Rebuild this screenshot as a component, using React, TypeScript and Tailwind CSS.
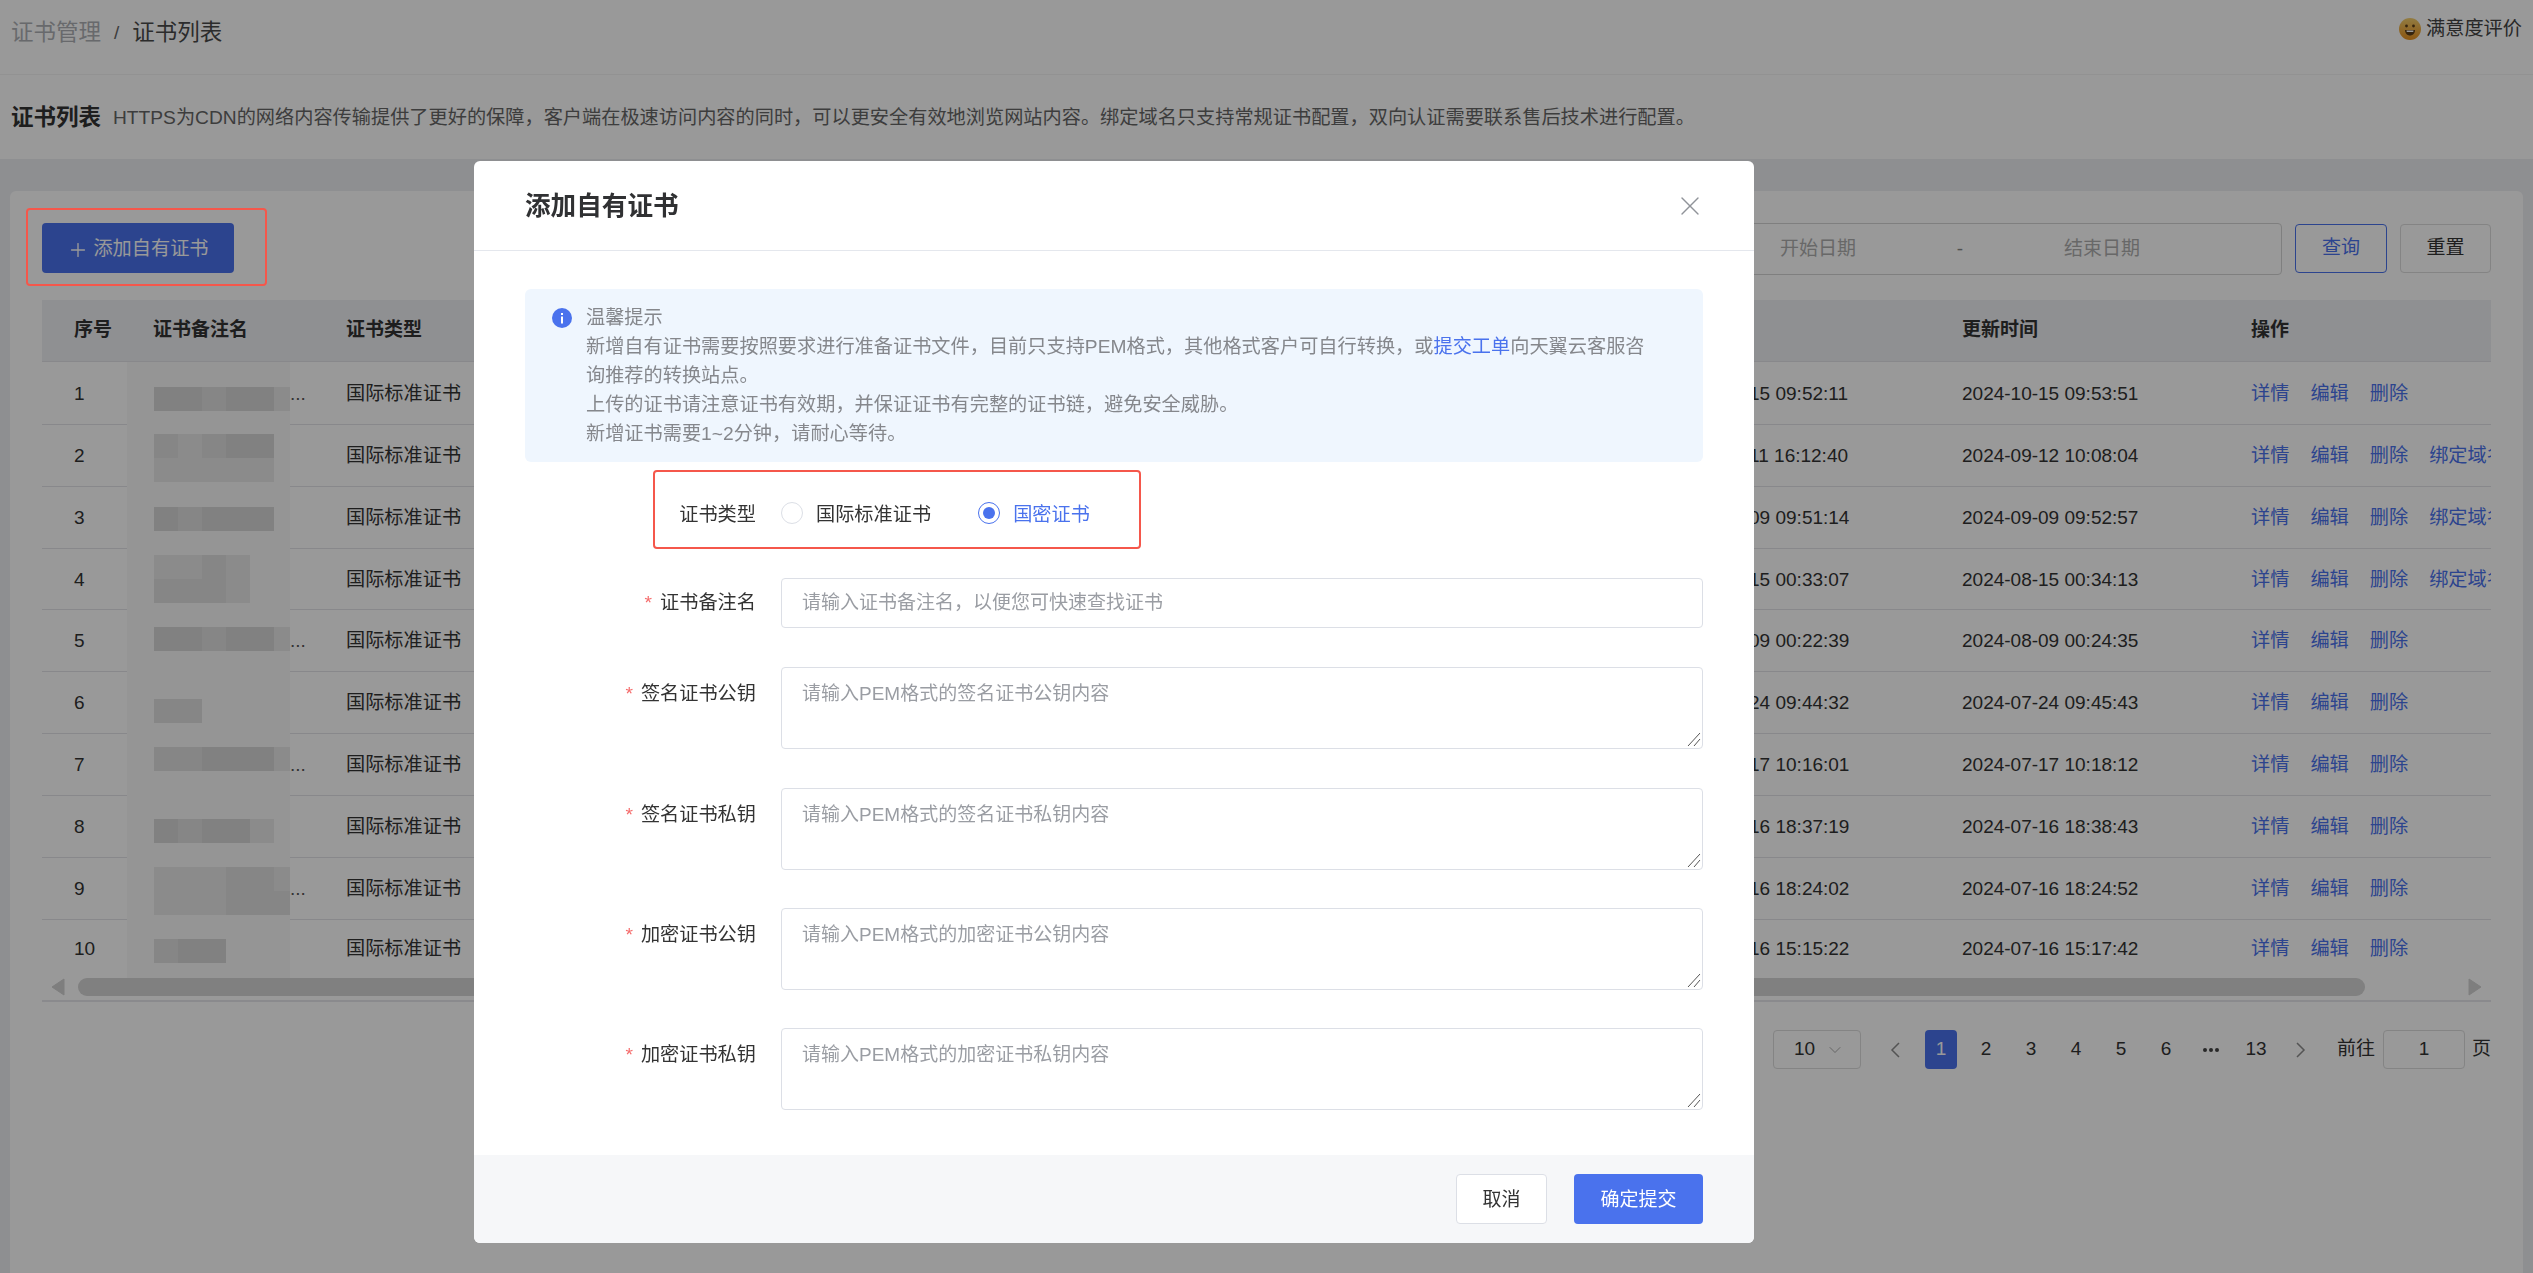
import { ChevronDown, Plus, X } from 'lucide-react';

const shade: Record<string, string> = {
  d: 'bg-[#d8d8d8]',
  m: 'bg-[#dfdfdf]',
  l: 'bg-[#e8e8e8]',
};

// name cell is a pixelated block in the picture: one string per line, one letter per cell
const rows = [
  { no: 1, h: 'h-[63px]', pt: 'pt-[25px]', cells: ['ddmddl'], more: true, created: '2024-10-15 09:52:11', updated: '2024-10-15 09:53:51', bind: false },
  { no: 2, h: 'h-[62px]', pt: 'pt-[9px]', cells: ['mlmdd', 'lllll'], more: false, created: '2024-09-11 16:12:40', updated: '2024-09-12 10:08:04', bind: true },
  { no: 3, h: 'h-[62px]', pt: 'pt-[20px]', cells: ['dmddd'], more: false, created: '2024-09-09 09:51:14', updated: '2024-09-09 09:52:57', bind: true },
  { no: 4, h: 'h-[61px]', pt: 'pt-[6px]', cells: ['llml', 'mmml'], more: false, created: '2024-08-15 00:33:07', updated: '2024-08-15 00:34:13', bind: true },
  { no: 5, h: 'h-[62px]', pt: 'pt-[17px]', cells: ['ddmddl'], more: true, created: '2024-08-09 00:22:39', updated: '2024-08-09 00:24:35', bind: false },
  { no: 6, h: 'h-[62px]', pt: 'pt-[27px]', cells: ['mm'], more: false, created: '2024-07-24 09:44:32', updated: '2024-07-24 09:45:43', bind: false },
  { no: 7, h: 'h-[62px]', pt: 'pt-[13px]', cells: ['mmdddl'], more: true, created: '2024-07-17 10:16:01', updated: '2024-07-17 10:18:12', bind: false },
  { no: 8, h: 'h-[62px]', pt: 'pt-[23px]', cells: ['dmddl'], more: false, created: '2024-07-16 18:37:19', updated: '2024-07-16 18:38:43', bind: false },
  { no: 9, h: 'h-[62px]', pt: 'pt-[9px]', cells: ['lllmml', 'lllmmm'], more: true, created: '2024-07-16 18:24:02', updated: '2024-07-16 18:24:52', bind: false },
  { no: 10, h: 'h-[58px]', pt: 'pt-[19px]', cells: ['mdd'], more: false, created: '2024-07-16 15:15:22', updated: '2024-07-16 15:17:42', bind: false },
];

const fields = [
  { label: '签名证书公钥', placeholder: '请输入PEM格式的签名证书公钥内容', mt: 'mt-[39px]' },
  { label: '签名证书私钥', placeholder: '请输入PEM格式的签名证书私钥内容', mt: 'mt-[39px]' },
  { label: '加密证书公钥', placeholder: '请输入PEM格式的加密证书公钥内容', mt: 'mt-[38px]' },
  { label: '加密证书私钥', placeholder: '请输入PEM格式的加密证书私钥内容', mt: 'mt-[38px]' },
];

function Mosaic({ lines }: { lines: string[] }) {
  return (
    <div className="flex flex-col">
      {lines.map((line, i) => (
        <div key={i} className="flex h-[24px]">
          {line.split('').map((c, j) => (
            <div key={j} className={`${shade[c]} ${j === 5 ? 'w-[16px]' : 'w-[24px]'}`} />
          ))}
        </div>
      ))}
    </div>
  );
}

function SatisfactionIcon() {
  return (
    <svg width="22" height="22" viewBox="0 0 22 22">
      <defs>
        <linearGradient id="face" x1="0" y1="0" x2="0" y2="1">
          <stop offset="0" stopColor="#f4cf6e" />
          <stop offset="1" stopColor="#e88f1e" />
        </linearGradient>
      </defs>
      <circle cx="11" cy="11" r="11" fill="url(#face)" />
      <circle cx="7.5" cy="8" r="1.4" fill="#5b3d18" />
      <circle cx="14.5" cy="8" r="1.4" fill="#5b3d18" />
      <path d="M6 12h10c0 3.4-2.2 5.5-5 5.5S6 15.400 6 12z" fill="#5b3d18" />
      <path d="M7.500 12.500h7c0 1-.4 1.500-.8 1.500H8.300c-.4 0-.8-.5-.8-1.500z" fill="#fff" />
    </svg>
  );
}

function ScrollArrow({ right }: { right?: boolean }) {
  return (
    <svg width="14" height="18" viewBox="0 0 14 18" className="shrink-0">
      <path d={right ? 'M1 1l12 8-12 8z' : 'M13 1L1 9l12 8z'} fill="#d2d2d2" stroke="#d2d2d2" strokeLinejoin="round" />
    </svg>
  );
}

function PageArrow({ right }: { right?: boolean }) {
  return (
    <svg width="11" height="16" viewBox="0 0 11 16" fill="none" stroke="#8c8c8c" strokeWidth="1.5">
      <path d={right ? 'M2 1l7 7-7 7' : 'M9 1L2 8l7 7'} />
    </svg>
  );
}

function Label({ text, required = true }: { text: string; required?: boolean }) {
  return (
    <label className="block w-[256px] shrink-0 pr-[25px] text-right text-[19.200px] leading-[28px] text-[#333]">
      {required && <span className="mr-[8px] text-[#f56c6c]">*</span>}
      {text}
    </label>
  );
}

export default function App() {
  return (
    <div className="flex h-screen flex-col overflow-hidden bg-[#edeef2] font-['Liberation_Sans','Noto_Sans_CJK_SC',sans-serif] text-[#333]">
      {/* Breadcrumb */}
      <div className="flex h-[75px] shrink-0 items-start justify-between border-b border-[#f4f4f4] bg-white pl-[11px] pr-[11px]">
        <div className="flex items-center pt-[17px] text-[22.500px] leading-[32px]">
          <span className="text-[#aeb0b5]">证书管理</span>
          <span className="mx-[13px] text-[19px] text-[#666]">/</span>
          <span className="text-[#4a4a4a]">证书列表</span>
        </div>
        <div className="flex items-center gap-[5px] pt-[15px] text-[19.200px] leading-[28px] text-[#444]">
          <SatisfactionIcon />
          <span>满意度评价</span>
        </div>
      </div>

      {/* Intro */}
      <div className="flex h-[84px] shrink-0 items-center bg-white pl-[11px] pt-[2px]">
        <span className="mr-[12px] text-[22.500px] font-bold text-[#333]">证书列表</span>
        <span className="text-[19.200px] text-[#666]">
          HTTPS为CDN的网络内容传输提供了更好的保障，客户端在极速访问内容的同时，可以更安全有效地浏览网站内容。绑定域名只支持常规证书配置，双向认证需要联系售后技术进行配置。
        </span>
      </div>

      {/* Card */}
      <div className="mx-[10px] mt-[32px] flex-1 rounded-t-[6px] bg-white px-[32px] pt-[32px]">
        <div className="flex h-[52px] items-start justify-between">
          <button className="flex h-[50px] w-[192px] items-center justify-center gap-[4px] rounded-[4px] bg-[#4a72ed] pt-[3px] text-[19.200px] text-white">
            <Plus size={22} strokeWidth={1.5} />
            添加自有证书
          </button>
          <div className="flex items-start">
            <div className="flex h-[52px] w-[604px] items-center rounded-[4px] border-[1.5px] border-[#d4d4d4] pr-[40px] text-[19px] text-[#aeaeae]">
              <span className="flex-1 text-center">开始日期</span>
              <span className="text-[#888]">-</span>
              <span className="flex-1 text-center">结束日期</span>
            </div>
            <button className="ml-[13px] mt-[1px] h-[49px] w-[92px] rounded-[4px] border-[1.5px] border-[#4a72ed] text-[19px] text-[#4a72ed]">查询</button>
            <button className="ml-[13px] mt-[1px] h-[49px] w-[91px] rounded-[4px] border-[1.5px] border-[#dcdcdc] text-[19px] text-[#333]">重置</button>
          </div>
        </div>

        {/* Table */}
        <div className="mt-[25px] overflow-hidden">
          <div className="flex h-[62px] items-center border-b-[1.5px] border-[#e3e3e8] bg-[#eff0f4] text-[19px] font-bold text-[#333]">
            <div className="w-[85px] shrink-0 pl-[32px]">序号</div>
            <div className="w-[219px] shrink-0 pl-[26px]">证书备注名</div>
            <div className="w-[1327px] shrink-0">证书类型</div>
            <div className="w-[289px] shrink-0">创建时间</div>
            <div className="w-[289px] shrink-0">更新时间</div>
            <div className="flex-1">操作</div>
          </div>
          {rows.map((r) => (
            <div key={r.no} className={`flex ${r.h} border-b-[1.5px] text-[19px] ${r.no === 10 ? 'border-transparent' : 'border-[#e3e3e8]'}`}>
              <div className="flex w-[85px] shrink-0 items-center pl-[32px] pt-[2px]">{r.no}</div>
              <div className="flex w-[219px] shrink-0 items-center">
                <div className={`-mb-[2px] h-[calc(100%+2px)] w-[163px] shrink-0 bg-[#f8f8f8] pl-[27px] ${r.pt}`}>
                  <Mosaic lines={r.cells} />
                </div>
                {r.more && <span className="pt-[2px] text-[#555]">...</span>}
              </div>
              <div className="flex w-[1327px] shrink-0 items-center pt-[2px] text-[19.200px]">国际标准证书</div>
              <div className="flex w-[289px] shrink-0 items-center pt-[2px]">{r.created}</div>
              <div className="flex w-[289px] shrink-0 items-center pt-[2px]">{r.updated}</div>
              <div className="flex min-w-0 flex-1 items-center gap-[21px] overflow-hidden whitespace-nowrap pt-[2px] text-[19.200px] text-[#4a72ed]">
                <span>详情</span>
                <span>编辑</span>
                <span>删除</span>
                {r.bind && <span>绑定域名</span>}
              </div>
            </div>
          ))}
          {/* Horizontal scrollbar */}
          <div className="flex h-[18px] items-center pl-[9px] pr-[9px]">
            <ScrollArrow />
            <div className="ml-[13px] h-[18px] w-[2287px] rounded-full bg-[#d5d5d5]" />
            <div className="flex-1" />
            <ScrollArrow right />
          </div>
          <div className="mt-[4px] h-[2px] bg-[#e6e6eb]" />
        </div>

        {/* Pagination */}
        <div className="mt-[28px] flex h-[39px] items-center justify-end text-[19px]">
          <div className="flex h-[39px] w-[88px] items-center justify-between rounded-[4px] border-[1.5px] border-[#dcdcdc] pl-[20px] pr-[15px]">
            <span>10</span>
            <ChevronDown size={20} strokeWidth={1} className="text-[#999]" />
          </div>
          <div className="ml-[19px] flex items-center gap-[13px]">
            <div className="flex h-[39px] w-[32px] items-center justify-center"><PageArrow /></div>
            <div className="flex h-[39px] w-[32px] items-center justify-center rounded-[4px] bg-[#4a72ed] text-white">1</div>
            {['2', '3', '4', '5', '6'].map((p) => (
              <div key={p} className="flex h-[39px] w-[32px] items-center justify-center">{p}</div>
            ))}
            <div className="flex h-[39px] w-[32px] items-center justify-center gap-[2px]">
              <span className="h-[4px] w-[4px] rounded-full bg-[#444]" />
              <span className="h-[4px] w-[4px] rounded-full bg-[#444]" />
              <span className="h-[4px] w-[4px] rounded-full bg-[#444]" />
            </div>
            <div className="flex h-[39px] w-[32px] items-center justify-center">13</div>
            <div className="flex h-[39px] w-[32px] items-center justify-center"><PageArrow right /></div>
          </div>
          <span className="ml-[20px]">前往</span>
          <div className="ml-[8px] flex h-[39px] w-[82px] items-center justify-center rounded-[4px] border-[1.5px] border-[#dcdcdc]">1</div>
          <span className="ml-[7px]">页</span>
        </div>
      </div>

      {/* Overlay with dialog */}
      <div className="fixed inset-0 bg-black/40">
        <div className="ml-[474px] mt-[161px] flex h-[1082px] w-[1280px] flex-col overflow-hidden rounded-[6px] bg-white">
          <div className="flex h-[90px] shrink-0 items-center justify-between border-b-[1.5px] border-[#e4e7ed] pl-[51px] pr-[48px]">
            <h2 className="pt-[2px] text-[25.600px] font-bold text-[#303133]">添加自有证书</h2>
            <X size={32} strokeWidth={1} className="text-[#909399]" />
          </div>

          <div className="flex-1 px-[51px] pt-[38px]">
            {/* Notice */}
            <div className="flex h-[173px] rounded-[6px] bg-[#eff6fe] pl-[27px] pt-[14px]">
              <svg width="20" height="20" viewBox="0 0 20 20" className="mt-[5px] shrink-0">
                <circle cx="10" cy="10" r="10" fill="#4a72ed" />
                <rect x="9" y="8.500" width="2" height="7" fill="#fff" />
                <rect x="9" y="5" width="2" height="2" fill="#fff" />
              </svg>
              <div className="ml-[14px] w-[1069px] text-[19.200px] leading-[29px] text-[#85878c]">
                <div>温馨提示</div>
                <div>
                  新增自有证书需要按照要求进行准备证书文件，目前只支持PEM格式，其他格式客户可自行转换，或<span className="text-[#4a72ed]">提交工单</span>向天翼云客服咨询推荐的转换站点。
                </div>
                <div>上传的证书请注意证书有效期，并保证证书有完整的证书链，避免安全威胁。</div>
                <div>新增证书需要1~2分钟，请耐心等待。</div>
              </div>
            </div>

            {/* Type */}
            <div className="relative mt-[26px] flex h-[50px] items-center pt-[4px]">
              <Label text="证书类型" required={false} />
              <span className="-mt-[4px] h-[22px] w-[22px] shrink-0 rounded-full border-[1.5px] border-[#dcdfe6]" />
              <span className="ml-[13px] text-[19.200px] text-[#333]">国际标准证书</span>
              <span className="-mt-[4px] ml-[47px] flex h-[22px] w-[22px] shrink-0 items-center justify-center rounded-full border-[1.5px] border-[#4a72ed]">
                <span className="h-[12px] w-[12px] rounded-full bg-[#4a72ed]" />
              </span>
              <span className="ml-[13px] text-[19.200px] text-[#4a72ed]">国密证书</span>
              <div className="absolute left-[128px] top-[-18px] h-[79px] w-[488px] rounded-[4px] border-2 border-[#f5574b]" />
            </div>

            {/* Fields */}
            <div className="mt-[40px] flex items-center">
              <Label text="证书备注名" />
              <input
                readOnly
                placeholder="请输入证书备注名，以便您可快速查找证书"
                className="h-[50px] min-w-0 flex-1 rounded-[4px] border-[1.5px] border-[#dcdfe6] px-[20px] text-[19px] outline-none placeholder:text-[#9a9da3]"
              />
            </div>
            {fields.map((f) => (
              <div key={f.label} className={`flex items-start ${f.mt}`}>
                <div className="shrink-0 pt-[13px]">
                  <Label text={f.label} />
                </div>
                <div className="relative h-[82px] min-w-0 flex-1">
                  <textarea
                    readOnly
                    placeholder={f.placeholder}
                    className="block h-full w-full resize-none rounded-[4px] border-[1.5px] border-[#dcdfe6] px-[20px] py-[12px] text-[19px] leading-[28px] outline-none placeholder:text-[#9a9da3]"
                  />
                  {/* resize handle */}
                  <svg width="14" height="14" viewBox="0 0 14 14" fill="none" stroke="#555" className="absolute bottom-[2px] right-[2px]">
                    <path d="M13 0L1 13M13 6L7 13" />
                  </svg>
                </div>
              </div>
            ))}
          </div>

          {/* Footer */}
          <div className="flex h-[88px] shrink-0 items-start justify-end gap-[27px] bg-[#f6f7f9] pr-[51px] pt-[19px]">
            <button className="h-[50px] w-[91px] rounded-[4px] border-[1.5px] border-[#dcdfe6] bg-white pt-[2px] text-[19px] text-[#333]">取消</button>
            <button className="h-[50px] w-[129px] rounded-[4px] bg-[#4a72ed] pt-[2px] text-[19px] text-white">确定提交</button>
          </div>
        </div>
        {/* Callout round the add button */}
        <div className="absolute left-[26px] top-[208px] h-[78px] w-[241px] rounded-[4px] border-2 border-[#f5574b]" />
      </div>
    </div>
  );
}
